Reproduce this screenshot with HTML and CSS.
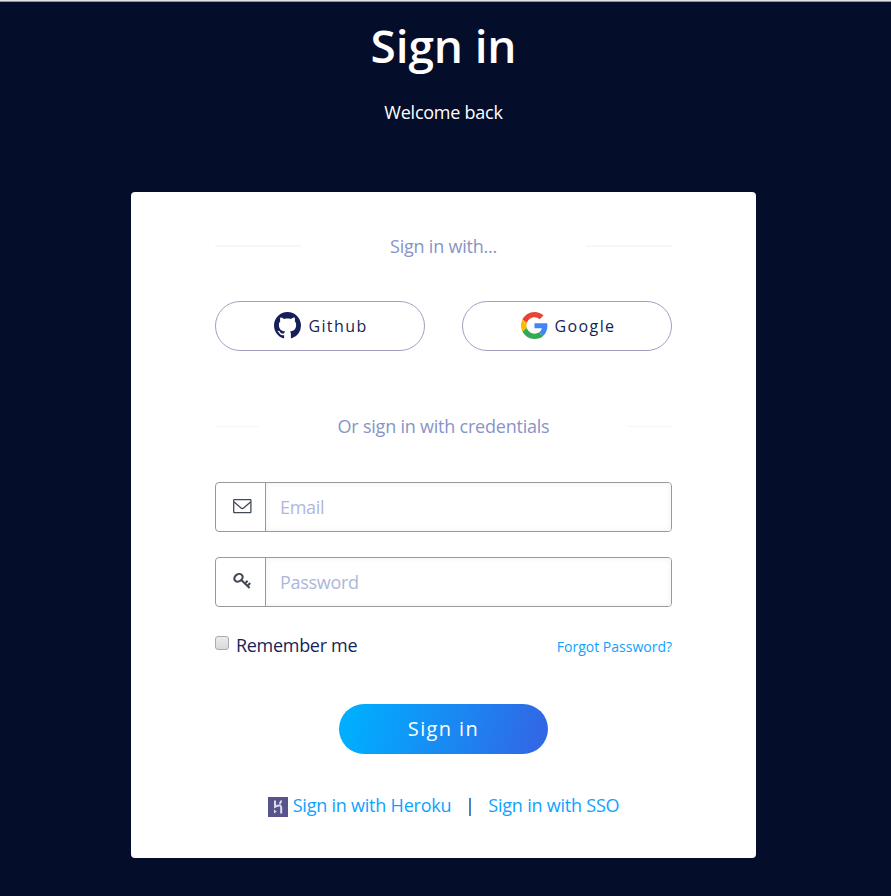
FILE: index.html
```html
<!DOCTYPE html>
<html lang="en">
<head>
<meta charset="utf-8">
<title>Sign in</title>
<link rel="stylesheet" href="styles.css">
</head>
<body>
<main class="page">
  <h1 class="title">Sign in</h1>
  <p class="subtitle">Welcome back</p>
  <section class="card">
    <div class="divider"><span class="rule"></span><span class="divider-text">Sign in with...</span><span class="rule"></span></div>
    <div class="providers">
      <a class="provider">
        <svg class="provider-icon" viewBox="0 0 16 16" fill="#161f57"><path d="M8 0C3.58 0 0 3.58 0 8c0 3.54 2.29 6.53 5.47 7.59.4.07.55-.17.55-.38 0-.19-.01-.82-.01-1.49-2.01.37-2.53-.49-2.69-.94-.09-.23-.48-.94-.82-1.13-.28-.15-.68-.52-.01-.53.63-.01 1.08.58 1.23.82.72 1.21 1.87.87 2.33.66.07-.52.28-.87.51-1.07-1.78-.2-3.64-.89-3.64-3.95 0-.87.31-1.59.82-2.15-.08-.2-.36-1.02.08-2.12 0 0 .67-.21 2.2.82.64-.18 1.32-.27 2-.27s1.36.09 2 .27c1.53-1.04 2.2-.82 2.2-.82.44 1.1.16 1.92.08 2.12.51.56.82 1.27.82 2.15 0 3.07-1.87 3.75-3.65 3.95.29.25.54.73.54 1.48 0 1.07-.01 1.93-.01 2.2 0 .21.15.46.55.38A8.01 8.01 0 0 0 16 8c0-4.42-3.58-8-8-8z"/></svg>
        <span class="provider-name">Github</span>
      </a>
      <a class="provider">
        <svg class="provider-icon" viewBox="0 0 48 48"><path fill="#EA4335" d="M24 9.5c3.54 0 6.71 1.22 9.21 3.6l6.85-6.85C35.9 2.38 30.47 0 24 0 14.62 0 6.51 5.38 2.56 13.22l7.98 6.19C12.43 13.72 17.74 9.5 24 9.5z"/><path fill="#4285F4" d="M46.98 24.55c0-1.57-.15-3.09-.38-4.55H24v9.02h12.94c-.58 2.96-2.26 5.48-4.78 7.18l7.73 6c4.51-4.18 7.09-10.36 7.09-17.65z"/><path fill="#FBBC05" d="M10.53 28.59c-.48-1.45-.76-2.99-.76-4.59s.27-3.14.76-4.59l-7.98-6.19C.92 16.46 0 20.12 0 24c0 3.88.92 7.54 2.56 10.78l7.97-6.19z"/><path fill="#34A853" d="M24 48c6.48 0 11.93-2.13 15.89-5.81l-7.73-6c-2.15 1.45-4.92 2.3-8.16 2.3-6.26 0-11.57-4.22-13.47-9.91l-7.98 6.19C6.51 42.62 14.62 48 24 48z"/></svg>
        <span class="provider-name">Google</span>
      </a>
    </div>
    <div class="divider divider-wide"><span class="rule"></span><span class="divider-text">Or sign in with credentials</span><span class="rule"></span></div>
    <form class="form">
      <label class="field">
        <span class="addon"><svg class="mail" viewBox="0 0 20 16" fill="none" stroke="#414a55" stroke-width="1.3"><rect x=".7" y="1.6" width="17.2" height="13" rx=".6"/><path d="M1.2 4 7.7 9.7Q9.3 11.2 10.9 9.7L17.5 4"/></svg></span>
        <input class="input" type="email" placeholder="Email">
      </label>
      <label class="field">
        <span class="addon"><svg class="key" viewBox="0 0 20 18" fill="none" stroke="#414a55" stroke-width="2.1"><ellipse cx="5.5" cy="5.8" rx="4.4" ry="3.5" transform="rotate(-35 5.5 5.8)"/><path d="M8.3 7.9 16.6 15.9M12 11.6l2.6-2.8M14.4 14l2.8-2.9"/></svg></span>
        <input class="input" type="password" placeholder="Password">
      </label>
      <div class="options">
        <label class="remember"><span class="checkbox"></span><span class="remember-text">Remember me</span></label>
        <a class="forgot">Forgot Password?</a>
      </div>
      <button class="submit" type="button"><span class="submit-text">Sign in</span></button>
    </form>
    <div class="alternatives">
      <svg class="heroku" viewBox="0 0 20 20"><path fill="#56548a" d="M0 0h20v20H0z"/><path fill="none" stroke="#dedeea" stroke-width="2" d="M7 3.5V9.8q3-1.6 5.2-1.2 1 .3 1 2V16.5M13.2 3.5q-.1 1.8-1.7 3.2"/><path fill="#dedeea" d="m6 12.5 2.7 2L6 16.5z"/></svg>
      <a class="link">Sign in with Heroku</a>
      <span class="pipe">|</span>
      <a class="link">Sign in with SSO</a>
    </div>
  </section>
</main>
</body>
</html>
```

FILE: styles.css
```css
* { box-sizing: border-box; }
body {
  margin: 0;
  background: #040d29;
  color: #161f57;
  font-family: "Open Sans", sans-serif;
  font-size: 18px;
}
.page {
  height: 896px;
  overflow: hidden;
  border-top: 1px solid #e0e2e5;
  box-shadow: inset 0 1px #8f949f;
  padding-right: 4px;
  display: flex;
  flex-direction: column;
  align-items: center;
}
.title {
  margin: 12px 0 0;
  color: #fff;
  font-size: 46px;
  font-weight: 600;
  line-height: 64px;
  letter-spacing: -0.15px;
}
.subtitle {
  margin: 23px 0 0;
  color: #fff;
  line-height: 24px;
  letter-spacing: -0.25px;
}
.card {
  width: 625px;
  height: 666px;
  margin-top: 68px;
  padding: 42px 84px 0;
  border-radius: 4px;
  background: #fff;
}
.divider {
  display: flex;
  align-items: center;
  justify-content: space-between;
  height: 24px;
}
.divider .rule { width: 86px; height: 2px; background: #f6f6fe; }
.divider-text { color: #8794c7; letter-spacing: -0.22px; }
.providers { display: flex; justify-content: space-between; margin-top: 43px; }
.provider {
  width: 210px;
  height: 50px;
  padding-left: 2px;
  display: flex;
  align-items: center;
  justify-content: center;
  border: 1px solid #a19fc0;
  border-radius: 25px;
  font-size: 16px;
  letter-spacing: 1.4px;
}
.provider-icon { width: 27px; height: 27px; margin: 0 7px 2px 0; }
.divider-wide { margin-top: 63px; }
.divider-wide .rule { width: 45px; height: 1px; }
.form { display: flex; flex-direction: column; margin-top: 44px; }
.field {
  display: flex;
  height: 50px;
  margin-bottom: 25px;
  border: 1px solid #999;
  border-radius: 4px;
  overflow: hidden;
}
.addon { width: 50px; border-right: 1px solid #999; padding: 15px 0 0 17px; }
.mail, .key { display: block; width: 20px; height: 16px; }
.key { height: 18px; margin-top: -1px; }
.input {
  flex: 1;
  border: 0;
  outline: 0;
  padding: 0 14px;
  font: inherit;
  letter-spacing: -0.3px;
  background: #fff;
  box-shadow: inset 0 0 7px rgba(0, 0, 0, .06);
}
.input::placeholder { color: #adb7db; opacity: 1; }
.options { display: flex; justify-content: space-between; height: 26px; line-height: 26px; }
.remember { display: flex; gap: 7px; letter-spacing: -0.3px; }
.checkbox {
  width: 14px;
  height: 14px;
  margin-top: 4px;
  border: 1px solid #aaa;
  border-radius: 3px;
  background: linear-gradient(#ececec, #d9d9d9);
}
.forgot { color: #0da2ff; font-size: 14px; line-height: 30px; }
.submit {
  align-self: center;
  width: 209px;
  height: 50px;
  margin-top: 46px;
  padding: 0 0 2px;
  border: 0;
  border-radius: 25px;
  background: linear-gradient(105deg, #00adff 8%, #3168e6 94%);
  color: #fff;
  font: 20px "Open Sans", sans-serif;
  letter-spacing: 1.4px;
}
.alternatives { display: flex; align-items: center; justify-content: center; height: 26px; margin-top: 38px; }
.link { color: #0da2ff; letter-spacing: -0.22px; }
.heroku { width: 20px; height: 20px; margin: 3px 5px 0 0; }
.pipe { width: 37px; text-align: center; }
```
